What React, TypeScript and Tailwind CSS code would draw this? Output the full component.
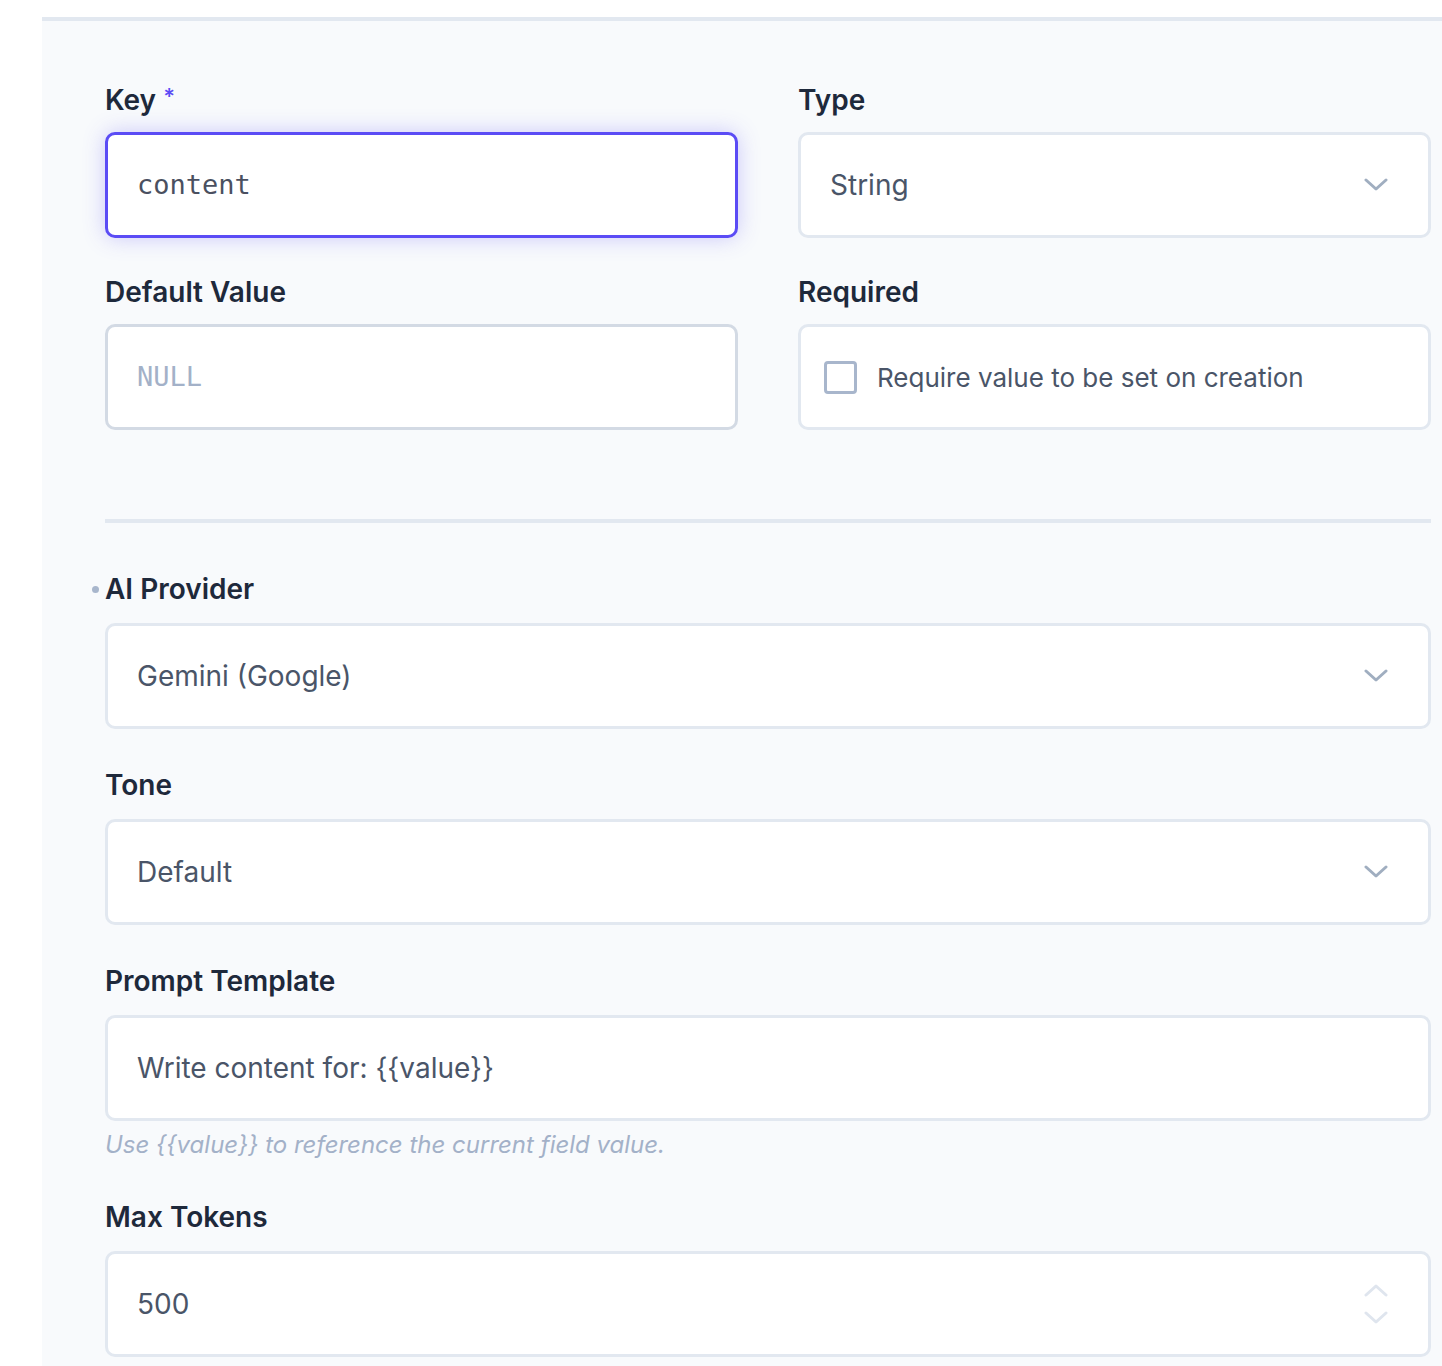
import React from "react";

const Chevron = ({ className = "" }: { className?: string }) => (
  <svg width="24" height="14" viewBox="0 0 24 14" fill="none" className={className}>
    <polyline points="2,2 12,11 22,2" stroke="currentColor" strokeWidth="3" strokeLinecap="round" strokeLinejoin="round" />
  </svg>
);

const Label = ({ children, tight = false }: { children: React.ReactNode; tight?: boolean }) => (
  <div className={`text-[28px] leading-[36px] font-semibold text-[#1e293b] ${tight ? "mb-[14px]" : "mb-[16px]"}`}>
    {children}
  </div>
);

const boxBase =
  "h-[106px] w-full rounded-[10px] bg-white border-[3px] flex items-center text-[28px] text-[#4a5568]";

const SelectBox = ({ value }: { value: string }) => (
  <div className={`${boxBase} border-[#e2e8f0] pl-[29px] pr-[40px] justify-between`}>
    <span>{value}</span>
    <Chevron className="text-[#a0aec0]" />
  </div>
);

export default function App() {
  return (
    <div className="min-h-screen bg-white pt-[17px] pl-[42px]" style={{ fontFamily: "Inter, 'Noto Sans', sans-serif" }}>
      <div className="bg-[#f8fafc] border-t-4 border-[#e2e8f0] pt-[61px] pl-[63px] pr-[11px] pb-[60px]">
        {/* top grid */}
        <div className="grid grid-cols-2 gap-x-[60px] gap-y-[36px]">
          <div>
            <Label tight>
              Key <span className="text-[#5b4cf5] text-[22px] align-top relative -top-[4px]">*</span>
            </Label>
            <div
              className={`${boxBase} border-[#5b4cf5] pl-[29px] shadow-[0_0_22px_rgba(91,76,245,0.28)]`}
              style={{ fontFamily: "'DejaVu Sans Mono', monospace" }}
            >
              <span className="text-[27px] text-[#4a5060]">content</span>
            </div>
          </div>
          <div>
            <Label tight>Type</Label>
            <SelectBox value="String" />
          </div>
          <div>
            <Label tight>Default Value</Label>
            <div
              className={`${boxBase} border-[#d3dae4] pl-[29px]`}
              style={{ fontFamily: "'DejaVu Sans Mono', monospace" }}
            >
              <span className="text-[27px] text-[#a3b1c8]">NULL</span>
            </div>
          </div>
          <div>
            <Label tight>Required</Label>
            <div className={`${boxBase} border-[#e2e8f0] pl-[23px] gap-[20px]`}>
              <span className="w-[33px] h-[33px] rounded-[4px] border-[3px] border-[#a8b6cc] bg-white shrink-0" />
              <span className="text-[26px]">Require value to be set on creation</span>
            </div>
          </div>
        </div>

        <div className="h-[4px] bg-[#e2e8f0] mt-[89px] mb-[48px]" />

        <div className="flex flex-col gap-[38px]">
          <div>
            <div className="relative">
              <span className="absolute -left-[13px] top-[15px] w-[7px] h-[7px] rounded-full bg-[#a8b6cc]" />
              <Label>AI Provider</Label>
            </div>
            <SelectBox value="Gemini (Google)" />
          </div>
          <div>
            <Label>Tone</Label>
            <SelectBox value="Default" />
          </div>
          <div>
            <Label>Prompt Template</Label>
            <div className={`${boxBase} border-[#e2e8f0] pl-[29px]`}>
              <span>Write content for: {"{{value}}"}</span>
            </div>
            <p className="mt-[8px] text-[24px] leading-[32px] italic text-[#a3b1c8]">
              Use {"{{value}}"} to reference the current field value.
            </p>
          </div>
          <div>
            <Label>Max Tokens</Label>
            <div className={`${boxBase} border-[#e2e8f0] pl-[29px] pr-[40px] justify-between`}>
              <span>500</span>
              <div className="flex flex-col gap-[14px] text-[#dfe5ee]">
                <Chevron className="rotate-180" />
                <Chevron />
              </div>
            </div>
          </div>
        </div>
      </div>
    </div>
  );
}
